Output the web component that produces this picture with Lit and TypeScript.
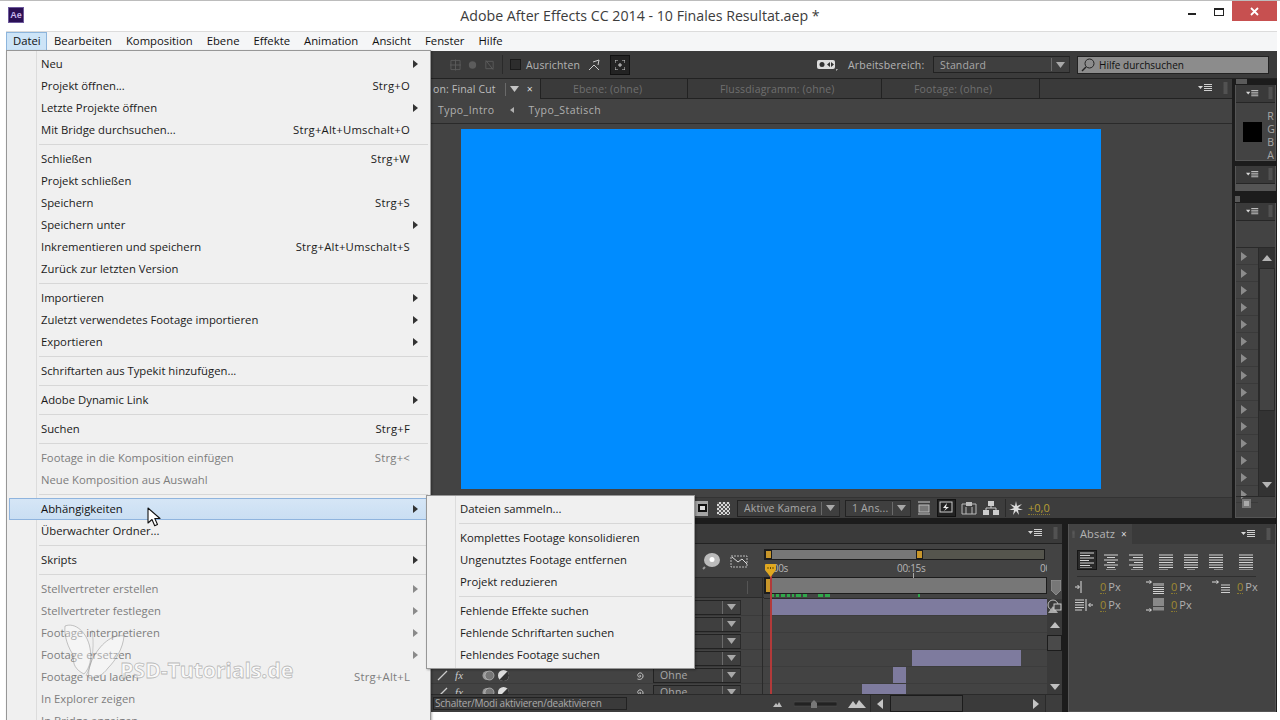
import { LitElement, html, css, svg } from "lit";
import { customElement } from "lit/decorators.js";

type Item = { t: string; s?: string; a?: boolean; d?: boolean; h?: boolean };

const MAIN_MENU: Item[][] = [
  [{ t: "Neu", a: true }, { t: "Projekt öffnen...", s: "Strg+O" }, { t: "Letzte Projekte öffnen", a: true }, { t: "Mit Bridge durchsuchen...", s: "Strg+Alt+Umschalt+O" }],
  [{ t: "Schließen", s: "Strg+W" }, { t: "Projekt schließen" }, { t: "Speichern", s: "Strg+S" }, { t: "Speichern unter", a: true }, { t: "Inkrementieren und speichern", s: "Strg+Alt+Umschalt+S" }, { t: "Zurück zur letzten Version" }],
  [{ t: "Importieren", a: true }, { t: "Zuletzt verwendetes Footage importieren", a: true }, { t: "Exportieren", a: true }],
  [{ t: "Schriftarten aus Typekit hinzufügen..." }],
  [{ t: "Adobe Dynamic Link", a: true }],
  [{ t: "Suchen", s: "Strg+F" }],
  [{ t: "Footage in die Komposition einfügen", s: "Strg+<", d: true }, { t: "Neue Komposition aus Auswahl", d: true }],
  [{ t: "Abhängigkeiten", a: true, h: true }, { t: "Überwachter Ordner..." }],
  [{ t: "Skripts", a: true }],
  [{ t: "Stellvertreter erstellen", a: true, d: true }, { t: "Stellvertreter festlegen", a: true, d: true }, { t: "Footage interpretieren", a: true, d: true }, { t: "Footage ersetzen", a: true, d: true }, { t: "Footage neu laden", s: "Strg+Alt+L", d: true }, { t: "In Explorer zeigen", d: true }, { t: "In Bridge anzeigen", d: true }],
];

const SUB_MENU: Item[][] = [
  [{ t: "Dateien sammeln..." }],
  [{ t: "Komplettes Footage konsolidieren" }, { t: "Ungenutztes Footage entfernen" }, { t: "Projekt reduzieren" }],
  [{ t: "Fehlende Effekte suchen" }, { t: "Fehlende Schriftarten suchen" }, { t: "Fehlendes Footage suchen" }],
];

const MENUBAR = ["Bearbeiten", "Komposition", "Ebene", "Effekte", "Animation", "Ansicht", "Fenster", "Hilfe"];

const BARS = [
  { top: 1, left: 7, width: 276, height: 16 },
  { top: 52, left: 148, width: 109, height: 16 },
  { top: 69, left: 129, width: 13, height: 16 },
  { top: 86, left: 98, width: 44, height: 10 },
];

const GREEN = [[0, 3], [5, 3], [10, 4], [16, 3], [21, 2], [25, 5], [32, 4], [47, 5], [54, 5], [147, 2]];

const menuIcon = () => html`<svg class="ic-menu" viewBox="0 0 16 9"><path d="M0 2h5L2.500 5z" fill="#d8d8d8"/><path d="M6 .5h8M6 2.500h8M6 4.500h8M6 6.500h8" stroke="#d0d0d0" stroke-width="1" fill="none"/></svg>`;
const grip = () => html`<svg class="ic-grip" viewBox="0 0 5 13"><path d="M.5 1h4M.5 3h4M.5 5h4M.5 7h4M.5 9h4M.5 11h4" stroke="#6b6b6b" fill="none"/></svg>`;
const ddArrow = () => html`<span class="dd-sep"></span><svg class="dd-arrow" viewBox="0 0 9 6"><path d="M0 0h9L4.500 6z" fill="#a8a8a8"/></svg>`;
const rightTri = () => html`<svg class="tri" viewBox="0 0 6 9"><path d="M0 0l6 4.500L0 9z" fill="#8c8c8c"/></svg>`;

const alignIcon = (lines: [number, number][]) => html`<svg class="ic-align" viewBox="0 0 18 16">${lines.map(([a, b], i) => svg`<rect x=${a} y=${i * 2.5 + 0.5} width=${b - a} height="1" fill="#d4d4d4"/>`)}</svg>`;
const L: [number, number][] = [[2, 16], [2, 12], [2, 16], [2, 11], [2, 16], [2, 12], [2, 14]];
const C: [number, number][] = [[2, 16], [5, 13], [2, 16], [5, 13], [2, 16], [5, 13], [4, 14]];
const R: [number, number][] = [[2, 16], [6, 16], [2, 16], [7, 16], [2, 16], [6, 16], [4, 16]];
const J1: [number, number][] = [[2, 16], [2, 16], [2, 16], [2, 16], [2, 16], [2, 16], [2, 11]];
const J2: [number, number][] = [[2, 16], [2, 16], [2, 16], [2, 16], [2, 16], [2, 16], [5, 13]];
const J3: [number, number][] = [[2, 16], [2, 16], [2, 16], [2, 16], [2, 16], [2, 16], [7, 16]];
const J4: [number, number][] = [[2, 16], [2, 16], [2, 16], [2, 16], [2, 16], [2, 16], [2, 16]];

const indent = (k: number) => {
  const lines = html`<path d="M7 3h10M7 5.500h10M7 8h10M7 10.500h10M7 13h10" stroke="#d0d0d0" fill="none"/>`;
  const icons = [
    html`<svg class="ic-ind" viewBox="0 0 19 16"><path d="M0 8h4M2.500 6l2 2-2 2" stroke="#ddd" fill="none"/><path d="M6 2v12" stroke="#ddd"/>${lines}</svg>`,
    html`<svg class="ic-ind" viewBox="0 0 19 16"><path d="M0 3h5M3.500 1.500l2 1.500-2 1.500" stroke="#ddd" fill="none"/><rect x="7" y="4" width="11" height="3" fill="#8a8a8a"/><path d="M7 8.500h11M7 10.500h11M7 12.500h11M7 14.500h11" stroke="#d0d0d0" fill="none"/></svg>`,
    html`<svg class="ic-ind" viewBox="0 0 19 16"><path d="M0 3h6M4.500 1.500l2 1.500-2 1.500" stroke="#ddd" fill="none"/><path d="M9 6h9M9 8.500h9M9 11h9M9 13.500h9" stroke="#d0d0d0" fill="none"/></svg>`,
    html`<svg class="ic-ind" viewBox="0 0 19 16"><path d="M0 3h9M0 5.500h9M0 8h9M0 10.500h9M0 13h7" stroke="#d0d0d0" fill="none"/><path d="M11 2v12" stroke="#ddd"/><path d="M18 8h-4M15.500 6l-2 2 2 2" stroke="#ddd" fill="none"/></svg>`,
    html`<svg class="ic-ind" viewBox="0 0 19 16"><path d="M7 2h11M7 4h11M7 6h11M7 8h11" stroke="#d0d0d0" fill="none"/><rect x="7" y="10" width="11" height="3.500" fill="#8a8a8a"/><path d="M0 13h5M3.500 11.500l2 1.500-2 1.500" stroke="#ddd" fill="none"/></svg>`,
  ];
  return icons[k];
};

@customElement("app-root")
export class AppRoot extends LitElement {
  static styles = css`
    :host { display: block; position: relative; width: 1280px; height: 720px; overflow: hidden; background: #fff; font-family: "Open Sans", "Liberation Sans", sans-serif; }
    * { box-sizing: border-box; }
    svg { display: block; flex: none; }

    .title { height: 31px; border-top: 1px solid #bcbcbc; display: flex; align-items: flex-start; position: relative; background: #fff; }
    .ae { width: 16px; height: 16px; margin: 6px 0 0 8px; background: #2b1055; border: 1px solid #6d5a9c; color: #c9b8ec; font: bold 9px/14px "Liberation Sans", sans-serif; text-align: center; }
    .title-text { position: absolute; left: 0; top: 5px; width: 1280px; text-align: center; font: 14.200px/20px "Open Sans", sans-serif; color: #3c3c3c; }
    .win-btns { margin-left: auto; display: flex; align-items: flex-start; }
    .w-min { width: 8px; height: 2px; background: #222; margin: 12px 18px 0 0; }
    .w-max { width: 10px; height: 8px; border: 1px solid #222; border-top-width: 2px; margin: 7px 8px 0 0; }
    .w-close { width: 45px; height: 20px; background: #c75050; display: flex; align-items: center; justify-content: center; margin-right: 3px; }

    .menubar { height: 20px; width: 1277px; background: #f5f6f7; border-top: 1px solid #dcdcdc; display: flex; padding-left: 6px; font: 11.300px/17px "Open Sans", sans-serif; color: #111; }
    .menubar span { padding: 0 7px; white-space: nowrap; }
    .menubar .on { background: #cde4f7; border: 1px solid #8db5dc; border-bottom: none; padding: 0 6px; line-height: 16px; width: 41px; }
    .edge { position: absolute; left: 0; top: 31px; width: 6px; height: 689px; background: #fff; }

    .work { width: 1277px; height: 661px; background: #1c1c1c; color: #b4b4b4; font: 10.500px/14px "Open Sans", sans-serif; letter-spacing: .15px; }

    /* toolbar */
    .toolbar { height: 28px; background: #3b3b3b; display: flex; align-items: center; padding-left: 450px; border-bottom: 1px solid #222; }
    .dimic { width: 11px; height: 12px; margin-right: 6px; }
    .vsep { width: 1px; height: 19px; background: #2a2a2a; margin: 0 7px 0 1px; }
    .check { width: 11px; height: 11px; background: #2d2d2d; border: 1px solid #1a1a1a; margin-right: 5px; }
    .snap { width: 12px; height: 12px; margin-left: 9px; }
    .boxic { width: 20px; height: 20px; background: #232323; border: 1px solid #111; margin-left: 9px; display: flex; align-items: center; justify-content: center; }
    .vr { width: 21px; height: 12px; margin-left: 187px; }
    .wslabel { margin-left: 10px; width: 85px; white-space: nowrap; }
    .dd { height: 17px; display: flex; align-items: center; background: #3f3f3f; border: 1px solid #222; border-right-color: #2a2a2a; padding-left: 6px; color: #a8a8a8; white-space: nowrap; }
    .dd-label { flex: 1; overflow: hidden; }
    .dd-sep { width: 1px; height: 13px; background: #6a6a6a; flex: none; }
    .dd-arrow { width: 9px; height: 6px; margin: 0 4px 0 4px; }
    .dd-ws { width: 137px; }
    .search { width: 192px; height: 18px; margin-left: 7px; background: #8c8c8c; border: 1px solid #222; color: #111; display: flex; align-items: center; padding-left: 3px; gap: 4px; white-space: nowrap; letter-spacing: 0; font-size: 10px; }
    .search svg { width: 14px; height: 14px; }

    /* upper panes */
    .upper { height: 439px; display: flex; }
    .comp { width: 1232px; height: 439px; display: flex; flex-direction: column; background: #434343; }
    .comptabs { height: 20px; display: flex; background: #3a3a3a; border-bottom: 1px solid #222; padding-left: 431px; align-items: stretch; }
    .tab-on { width: 109px; background: #434343; margin-bottom: -1px; display: flex; align-items: center; padding-left: 2px; color: #bcbcbc; white-space: nowrap; }
    .tab-on .dd-sep { margin-left: 9px; }
    .tab-on b { font-weight: 400; color: #ddd; margin-left: 4px; }
    .tab-off { border-left: 1px solid #222; display: flex; align-items: center; padding-left: 32px; color: #6f6f6f; white-space: nowrap; }
    .t1 { width: 147px; } .t2 { width: 194px; } .t3 { width: 159px; border-right: 1px solid #222; }
    .tabs-end { margin-left: auto; display: flex; align-items: center; }
    .ic-menu { width: 16px; height: 9px; }
    .ic-grip { width: 5px; height: 13px; margin: 0 4px 0 9px; }
    .crumbs { height: 25px; display: flex; align-items: center; padding: 0 0 2px 438px; border-bottom: 1px solid #2a2a2a; color: #b0b0b0; letter-spacing: .45px; }
    .crumbs svg { width: 4px; height: 6px; margin: 0 15px 0 15px; }
    .viewer { height: 373px; padding: 5px 0 0 461px; }
    .blue { width: 640px; height: 360px; background: #008cff; }
    .compfoot { height: 21px; background: #3d3d3d; border-top: 1px solid #333; display: flex; align-items: center; padding-left: 694px; }
    .fgrp { width: 14px; height: 15px; background: #a4a4a4; display: flex; align-items: center; justify-content: flex-end; }
    .fbox { width: 9px; height: 8px; background: #ddd; border: 2px solid #111; margin-right: 1px; }
    .checker { width: 13px; height: 13px; margin-left: 9px; background: repeating-conic-gradient(#d8d8d8 0 25%, #555 0 50%) 0 0 / 4px 4px; }
    .dd-cam { width: 103px; margin-left: 7px; }
    .dd-ans { width: 66px; margin-left: 5px; }
    .fic { width: 14px; height: 14px; margin-left: 6px; }
    .fic-sel { width: 19px; height: 18px; margin-left: 6px; background: #222; border: 1px solid #111; padding: 1px; }
    .fic2 { width: 16px; height: 14px; margin-left: 5px; }
    .fic3 { margin-left: 6px; }
    .exposure { margin-left: 5px; color: #b89e34; border-bottom: 1px dotted #8a7a30; line-height: 12px; font-size: 11px; letter-spacing: 0; }
    .shut { width: 14px; height: 14px; margin-left: 3px; }
    .fsep { width: 1px; height: 18px; background: #2a2a2a; margin-left: 6px; }

    /* side */
    .side { width: 41px; margin-left: 3px; display: flex; flex-direction: column; }
    .mini { height: 5px; width: 11px; background: #5a5a5a; margin: 0 0 1px 1px; }
    .mini.small { width: 5px; height: 6px; margin: 5px 0 1px 0; }
    .sp { background: #434343; border: 1px solid #555; border-top: none; }
    .sp-head { height: 18px; background: #3a3a3a; border-bottom: 1px solid #262626; display: flex; align-items: center; justify-content: flex-end; }
    .sp-head .ic-menu { width: 14px; height: 8px; }
    .sp-head .ic-grip { margin: 0 2px 0 8px; }
    .sp1 { height: 76px; }
    .info { display: flex; padding: 19px 0 0 7px; height: 58px; overflow: hidden; }
    .swatch { width: 20px; height: 20px; background: #000; }
    .rgba { margin-left: 5px; margin-top: -12px; line-height: 13px; color: #a8a8a8; width: 8px; letter-spacing: 0; }
    .sp2 { height: 25px; margin-top: 5px; }
    .sp2 i { display: block; height: 6px; background: #555; }
    .sp3 { flex: 1; display: flex; flex-direction: column; }
    .sp3 .hole { height: 26px; }
    .list { display: flex; height: 249px; border-top: 1px solid #2a2a2a; }
    .tris { width: 22px; }
    .tris div { height: 17px; border-bottom: 1px solid #3a3a3a; display: flex; align-items: center; padding-left: 5px; }
    .tri { width: 6px; height: 9px; }
    .vscroll { flex: 1; background: #333; border-left: 1px solid #2a2a2a; display: flex; flex-direction: column; align-items: center; }
    .vs-up { height: 20px; display: flex; align-items: center; }
    .vs-th { width: 100%; height: 143px; background: #434343; border: 1px solid #2a2a2a; }
    .vs-dn { margin-top: auto; height: 14px; }
    .arr { width: 10px; height: 6px; }
    .sp-foot { height: 15px; padding: 2px 0 0 6px; border-top: 1px solid #2a2a2a; }
    .sp-foot div { width: 9px; height: 9px; background: #aaa; border: 2px solid #777; }

    /* lower */
    .lower { display: flex; margin-top: 6px; height: 188px; }
    .tl { width: 1062px; display: flex; flex-direction: column; background: #434343; position: relative; }
    .lhead { height: 20px; background: #3a3a3a; border-bottom: 1px solid #222; display: flex; justify-content: flex-end; align-items: center; }
    .tl-mid { flex: 1; display: flex; min-height: 0; overflow: hidden; }
    .tl-left { width: 764px; display: flex; flex-direction: column; }
    .tl-lefttop { height: 55px; flex: none; }
    .ictop { height: 33px; display: flex; justify-content: flex-end; align-items: center; padding-right: 16px; gap: 10px; }
    .bulb { width: 18px; height: 18px; } .graph { width: 18px; height: 14px; }
    .lefthdr { height: 21px; background: #3b3b3b; border-top: 1px solid #2a2a2a; border-bottom: 1px solid #2a2a2a; display: flex; justify-content: flex-end; }
    .lefthdr i { width: 1px; background: #555; margin: 3px 16px 3px 0; }
    .lrow { height: 17px; border-bottom: 1px solid #3a3a3a; display: flex; align-items: center; padding-left: 437px; flex: none; }
    .pen { width: 11px; height: 11px; }
    .fx { font: italic 11px/14px "Liberation Serif", serif; color: #ccc; margin-left: 7px; width: 18px; }
    .sw { width: 14px; height: 11px; margin-left: 8px; }
    .swb { width: 13px; height: 13px; margin-left: 2px; }
    .spir { width: 11px; height: 11px; margin-left: auto; position: relative; left: -2px; }
    .dd-ohne { width: 88px; height: 15px; margin: 0 23px 0 6px; padding-left: 6px; }
    .tl-right { width: 298px; position: relative; }
    .rtop { height: 54px; width: 283px; padding-top: 5px; }
    .wa { height: 11px; display: flex; background: #55554d; border: 1px solid #1c1c1c; width: 281px; }
    .wa-on { width: 144px; background: #777; }
    .hnd { width: 7px; background: #c8962a; border: 1px solid #1c1c1c; flex: none; }
    .ruler { height: 18px; position: relative; color: #b6b6b6; font-size: 10px; letter-spacing: -.3px; white-space: nowrap; overflow: hidden; }
    .ruler span { position: absolute; top: 1px; }
    .ruler .r1 { left: 1px; } .ruler .r2 { left: 133px; } .ruler .r3 { left: 276px; }
    .ruler i { position: absolute; left: 149px; top: 13px; width: 1px; height: 5px; background: #aaa; }
    .nav { height: 17px; background: #777; border: 1px solid #1c1c1c; display: flex; margin-top: -1px; }
    .nav .hnd { width: 6px; }
    .greens { height: 4px; display: flex; padding-left: 7px; position: relative; }
    .greens i { position: absolute; top: 0; height: 3px; background: #2fa84a; }
    .shield { position: absolute; left: 287px; top: 36px; width: 10px; height: 15px; }
    .lanes { position: relative; height: 96px; width: 283px; border-top: 1px solid #2a2a2a; overflow: hidden; }
    .lanes .bar { position: absolute; background: #7e7b9e; }
    .lane-line { height: 17px; border-bottom: 1px solid #3c3c3c; }
    .redline { position: absolute; left: 6px; top: 21px; width: 1.500px; height: 135px; background: #b23a3a; }
    .playhead { position: absolute; left: 1px; top: 20px; width: 11px; height: 13px; }
    .leftline { position: absolute; left: -2px; top: 33px; width: 1px; height: 125px; background: #2a2a2a; }
    .tlscroll { position: absolute; left: 283px; top: 55px; width: 15px; height: 96px; background: #3a3a3a; display: flex; flex-direction: column; align-items: center; }
    .layers-ic { width: 15px; height: 15px; }
    .ts-up { height: 21px; width: 100%; display: flex; align-items: center; justify-content: center; }
    .ts-th { height: 16px; width: 100%; background: #4a4a4a; border: 1px solid #1c1c1c; }
    .ts-dn { margin-top: auto; height: 16px; display: flex; align-items: center; }
    .tl-bot { height: 18px; background: #3d3d3d; border-top: 1px solid #2a2a2a; display: flex; align-items: center; padding-left: 433px; flex: none; }
    .status { width: 194px; height: 13px; background: #3a3a3a; border: 1px solid #222; font-size: 10px; line-height: 11px; color: #aaa; padding-left: 1px; white-space: nowrap; letter-spacing: -.22px; }
    .mt-s { width: 9px; height: 6px; margin-left: 146px; }
    .zslider { width: 43px; height: 8px; margin-left: 12px; }
    .mt-b { width: 18px; height: 8px; margin-left: 11px; }
    .hscroll { width: 176px; height: 17px; margin-left: 4px; display: flex; align-items: center; background: #3a3a3a; border-left: 1px solid #2a2a2a; border-right: 1px solid #2a2a2a; padding: 0 6px; }
    .hscroll svg { width: 6px; height: 10px; }
    .hs-th { width: 73px; height: 17px; background: #444; border: 1px solid #1c1c1c; margin: 0 auto 0 7px; }

    .para { width: 208px; margin-left: 6px; background: #434343; border: 1px solid #555; border-top: none; display: flex; flex-direction: column; }
    .phead { height: 20px; background: #3a3a3a; display: flex; align-items: center; }
    .ptab { width: 63px; height: 20px; background: #434343; display: flex; align-items: center; padding-left: 3px; color: #b4b4b4; font-size: 11px; }
    .ptab .ic-grip { width: 3px; margin: 0 5px 0 0; }
    .ptab b { font-weight: 400; color: #ddd; margin-left: 6px; font-size: 10px; }
    .phead-end { margin-left: auto; display: flex; align-items: center; }
    .aligns { display: flex; height: 26px; align-items: flex-end; padding-left: 8px; }
    .ic-align { width: 18px; height: 16px; }
    .alsel { width: 20px; height: 20px; background: #2a2a2a; border: 1px solid #161616; padding: 1px 0; display: flex; justify-content: center; margin-right: 5px; }
    .aligns > svg { margin-right: 7px; }
    .aligns > .gap { margin-left: 5px; }
    .aligns > .gap2 { margin-left: 5px; }
    .pline { height: 1px; background: #2f2f2f; margin: 6px 19px 0 8px; }
    .prows { display: grid; grid-template-columns: 71px 66px 60px; grid-auto-rows: 18px; padding: 1px 0 0 6px; }
    .pcell { display: flex; align-items: center; color: #b0b0b0; letter-spacing: 0; font-size: 11px; }
    .ic-ind { width: 19px; height: 16px; }
    .pcell u { color: #a08a32; text-decoration: none; border-bottom: 1px dotted #8a7a30; margin: 0 2px 0 6px; line-height: 12px; font-size: 11px; }
    .whitebar { height: 8px; }

    /* menus */
    .menu { position: absolute; background: #f0f0f0; border: 1px solid #979797; padding: 2px; font: 11.300px/22px "Open Sans", sans-serif; color: #1a1a1a; box-shadow: 1px 1px 2px rgba(0,0,0,.3); letter-spacing: 0; }
    .main { left: 6px; top: 50px; width: 425px; height: 700px; }
    .sub { left: 426px; top: 495px; width: 269px; height: 174px; }
    .menu::before { content: ""; position: absolute; top: 0; bottom: 0; width: 1px; background: #dcdcdc; }
    .main::before { left: 29px; }
    .sub::before { left: 28px; }
    .row { height: 22px; display: flex; padding: 0 10px 0 32px; white-space: nowrap; align-items: center; position: relative; }
    .sub .row { padding-left: 31px; }
    .row.d { color: #7d7d7d; }
    .row.h { background: linear-gradient(#d6e6f6, #c9def3); outline: 1px solid #8fb4de; outline-offset: -1px; color: #111; }
    .lbl { flex: 1; }
    .sc { margin-right: 8px; letter-spacing: .22px; }
    .ma { width: 5px; height: 8px; margin-left: -3px; }
    .sep { height: 1px; background: #d7d7d7; margin: 3px 0 3px 30px; position: relative; }

    .cursor { position: absolute; left: 147px; top: 507px; width: 15px; height: 21px; }
    .wm { position: absolute; left: 62px; top: 622px; pointer-events: none; display: flex; }
    .wm svg { width: 66px; height: 60px; }
    .wm span { font: bold 21.500px/24px "Open Sans", sans-serif; color: rgba(255,255,255,.65); -webkit-text-stroke: .8px rgba(110,110,110,.45); margin: 36px 0 0 -8px; white-space: nowrap; letter-spacing: -.2px; }
  `;

  private renderMenu(groups: Item[][]) {
    return groups.map((g, i) => html`
      ${i ? html`<div class="sep"></div>` : ""}
      ${g.map((it) => html`<div class="row ${it.d ? "d" : ""} ${it.h ? "h" : ""}">
        <span class="lbl">${it.t}</span>
        ${it.s ? html`<span class="sc">${it.s}</span>` : ""}
        ${it.a ? html`<svg class="ma" viewBox="0 0 5 8"><path d="M0 0l5 4-5 4z" fill=${it.d ? "#8a8a8a" : "#333"}/></svg>` : ""}
      </div>`)}
    `);
  }

  private layerRow() {
    return html`<div class="lrow">
      <svg class="pen" viewBox="0 0 11 11"><path d="M1 10L10 1" stroke="#ccc" stroke-width="1.300"/></svg>
      <span class="fx">fx</span>
      <svg class="sw" viewBox="0 0 14 11"><circle cx="6" cy="5.500" r="4.500" fill="#999"/><circle cx="8.500" cy="5.500" r="4.500" fill="#777" stroke="#ccc" stroke-width=".6"/></svg>
      <svg class="swb" viewBox="0 0 13 13"><circle cx="6.500" cy="6.500" r="5.500" fill="#ddd"/><path d="M6.500 1a5.500 5.500 0 0 1 0 11z" fill="#333" transform="rotate(45 6.500 6.500)"/></svg>
      <svg class="spir" viewBox="0 0 11 11"><path d="M5.500 5.500c1-1 2 1 .5 1.500-2 .5-3-2-1.500-3.500 2-1.500 4.500 0 4.500 2.500 0 3-3 4-5.500 3" stroke="#ccc" fill="none"/></svg>
      <div class="dd dd-ohne"><span class="dd-label">Ohne</span>${ddArrow()}</div>
    </div>`;
  }

  render() {
    return html`
      <div class="title">
        <div class="ae">Ae</div>
        <div class="title-text">Adobe After Effects CC 2014 - 10 Finales Resultat.aep *</div>
        <div class="win-btns">
          <div class="w-min"></div><div class="w-max"></div>
          <div class="w-close"><svg width="9" height="9" viewBox="0 0 9 9"><path d="M1 1l7 7M8 1L1 8" stroke="#fff" stroke-width="1.800"/></svg></div>
        </div>
      </div>
      <div class="menubar"><span class="on">Datei</span>${MENUBAR.map((m) => html`<span>${m}</span>`)}</div>

      <div class="work">
        <div class="toolbar">
          <svg class="dimic" viewBox="0 0 12 12"><path d="M6 0v12M0 6h12M1 1h10v10H1z" stroke="#5c5c5c" fill="none"/></svg>
          <svg class="dimic" viewBox="0 0 12 12"><circle cx="6" cy="6" r="4" fill="#5c5c5c"/></svg>
          <svg class="dimic" viewBox="0 0 12 12"><path d="M2 1l8 10M2 2h8v8H2z" stroke="#5c5c5c" fill="none"/></svg>
          <div class="vsep"></div>
          <div class="check"></div>
          <span>Ausrichten</span>
          <svg class="snap" viewBox="0 0 12 12"><path d="M0 11l5-5 5 5M4 3l6-2-1 5" stroke="#ccc" fill="none"/></svg>
          <div class="boxic"><svg width="10" height="10" viewBox="0 0 10 10"><path d="M0 3V0h3M7 0h3v3M0 7v3h3M7 10h3V7M4 4h2v2H4z" stroke="#ccc" fill="none"/></svg></div>
          <svg class="vr" viewBox="0 0 21 12"><rect x="0" y="1" width="18" height="9" rx="2" fill="#ddd"/><circle cx="5" cy="5.500" r="2.500" fill="#333"/><path d="M10 5.500l3-2.500v5zM17 5.500l-3-2.500v5z" fill="#333"/><path d="M20 10v1h-1" stroke="#ccc" fill="none"/></svg>
          <span class="wslabel">Arbeitsbereich:</span>
          <div class="dd dd-ws"><span class="dd-label">Standard</span>${ddArrow()}</div>
          <div class="search"><svg viewBox="0 0 14 14"><circle cx="8.500" cy="5.500" r="4.500" stroke="#222" fill="none"/><path d="M5 9l-4 4" stroke="#222" stroke-width="1.500"/></svg><span>Hilfe durchsuchen</span></div>
        </div>

        <div class="upper">
          <div class="comp">
            <div class="comptabs">
              <div class="tab-on"><span>on: Final Cut</span><span class="dd-sep"></span><svg class="dd-arrow" viewBox="0 0 9 6"><path d="M0 0h9L4.500 6z" fill="#c4c4c4"/></svg><b>×</b></div>
              <div class="tab-off t1">Ebene: (ohne)</div>
              <div class="tab-off t2">Flussdiagramm: (ohne)</div>
              <div class="tab-off t3">Footage: (ohne)</div>
              <div class="tabs-end">${menuIcon()}${grip()}</div>
            </div>
            <div class="crumbs"><span>Typo_Intro</span><svg viewBox="0 0 4 6"><path d="M4 0L0 3l4 3z" fill="#b0b0b0"/></svg><span>Typo_Statisch</span></div>
            <div class="viewer"><div class="blue"></div></div>
            <div class="compfoot">
              <div class="fgrp"><div class="fbox"></div></div>
              <div class="checker"></div>
              <div class="dd dd-cam"><span class="dd-label">Aktive Kamera</span>${ddArrow()}</div>
              <div class="dd dd-ans"><span class="dd-label">1 Ans...</span>${ddArrow()}</div>
              <svg class="fic" viewBox="0 0 14 14"><path d="M1 1h12M1 13h12" stroke="#ccc"/><rect x="2" y="4" width="10" height="7" fill="#777" stroke="#bbb"/></svg>
              <svg class="fic-sel" viewBox="0 0 15 14"><rect x="1" y="1" width="12" height="10" fill="none" stroke="#ccc"/><path d="M8 2L4 7h3L5 10l5-4H7z" fill="#eee"/></svg>
              <svg class="fic2" viewBox="0 0 16 14"><path d="M1 3h14v10H1zM5 6v7M11 6v7" stroke="#bbb" fill="none"/><path d="M5 1h6v4H5z" fill="#bbb"/></svg>
              <svg class="fic2 fic3" viewBox="0 0 16 14"><path d="M5 0h6v5H5zM0 9h6v5H0zM10 9h6v5h-6z" fill="#ccc"/><path d="M8 5v2M3 9V7h10v2" stroke="#ccc" fill="none"/></svg>
              <div class="fsep"></div>
              <svg class="shut" viewBox="0 0 14 14"><path d="M7 0l1 5 5-2-4 4 5 2-5 0 1 5-3-4-3 4 1-5-5 0 5-2-4-4 5 2z" fill="#ddd"/></svg>
              <span class="exposure">+0,0</span>
            </div>
          </div>

          <div class="side">
            <div class="mini"></div>
            <div class="sp sp1">
              <div class="sp-head">${menuIcon()}${grip()}</div>
              <div class="info"><div class="swatch"></div><div class="rgba">R<br />G<br />B<br />A</div></div>
            </div>
            <div class="sp sp2"><div class="sp-head">${menuIcon()}${grip()}</div><i></i></div>
            <div class="mini small"></div>
            <div class="sp sp3">
              <div class="sp-head">${menuIcon()}${grip()}</div>
              <div class="hole"></div>
              <div class="list">
                <div class="tris">${Array.from({ length: 15 }, () => html`<div>${rightTri()}</div>`)}</div>
                <div class="vscroll">
                  <div class="vs-up"><svg class="arr" viewBox="0 0 10 6"><path d="M5 0l5 6H0z" fill="#b4b4b4"/></svg></div>
                  <div class="vs-th"></div>
                  <div class="vs-dn"><svg class="arr" viewBox="0 0 10 6"><path d="M0 0h10L5 6z" fill="#b4b4b4"/></svg></div>
                </div>
              </div>
              <div class="sp-foot"><div></div></div>
            </div>
          </div>
        </div>

        <div class="lower">
          <div class="tl">
            <div class="lhead">${menuIcon()}${grip()}</div>
            <div class="tl-mid">
              <div class="tl-left">
                <div class="tl-lefttop">
                  <div class="ictop">
                    <svg class="bulb" viewBox="0 0 18 18"><ellipse cx="10" cy="8" rx="8" ry="7" fill="#bbb"/><circle cx="10" cy="7.500" r="2.500" fill="#fff"/><path d="M3 15l-2 2" stroke="#999" stroke-width="2"/></svg>
                    <svg class="graph" viewBox="0 0 18 14"><path d="M1 2h16v11H1z" stroke="#bbb" fill="none" stroke-dasharray="2 1"/><path d="M2 3l6 5 4-3 5 5" stroke="#ddd" fill="none"/></svg>
                  </div>
                  <div class="lefthdr"><i></i></div>
                </div>
                ${Array.from({ length: 6 }, () => this.layerRow())}
              </div>
              <div class="tl-right">
                <div class="rtop">
                  <div class="wa"><div class="hnd"></div><div class="wa-on"></div><div class="hnd"></div></div>
                  <div class="ruler"><span class="r1">0:00s</span><span class="r2">00:15s</span><span class="r3">00</span><i></i></div>
                  <div class="nav"><div class="hnd"></div></div>
                  <div class="greens">${GREEN.map(([l, w]) => html`<i style="left:${l + 7}px;width:${w}px"></i>`)}</div>
                </div>
                <div class="lanes">
                  ${[0, 1, 2, 3, 4, 5].map(() => html`<div class="lane-line"></div>`)}
                  ${BARS.map((b) => html`<div class="bar" style="top:${b.top - 1}px;left:${b.left}px;width:${b.width}px;height:${b.height}px"></div>`)}
                </div>
                <div class="leftline"></div>
                <div class="redline"></div>
                <svg class="playhead" viewBox="0 0 11 13"><path d="M0 1q0-1 1-1h9q1 0 1 1v5l-5.500 7L0 6z" fill="#e0a820"/><path d="M3 3v2M5.500 3v2M8 3v2" stroke="#6b4f00"/></svg>
                <svg class="shield" viewBox="0 0 10 15"><path d="M0 0h10v10l-5 5-5-5z" fill="#777" stroke="#aaa" stroke-width=".6"/></svg>
                <div class="tlscroll">
                  <svg class="layers-ic" viewBox="0 0 15 15"><circle cx="6" cy="6" r="5" stroke="#bbb" fill="none"/><path d="M1 14l5-7 5 7z" fill="#aaa"/><rect x="7" y="5" width="7" height="6" stroke="#ccc" fill="#444"/></svg>
                  <div class="ts-up"><svg class="arr" viewBox="0 0 10 6"><path d="M5 0l5 6H0z" fill="#c0c0c0"/></svg></div>
                  <div class="ts-th"></div>
                  <div class="ts-dn"><svg class="arr" viewBox="0 0 10 6"><path d="M0 0h10L5 6z" fill="#c0c0c0"/></svg></div>
                </div>
              </div>
            </div>
            <div class="tl-bot">
              <div class="status">Schalter/Modi aktivieren/deaktivieren</div>
              <svg class="mt-s" viewBox="0 0 9 6"><path d="M0 6l3-4 1.500 2L6 1l3 5z" fill="#bbb"/></svg>
              <svg class="zslider" viewBox="0 0 43 8"><rect y="2" width="43" height="4" fill="#222" stroke="#555" stroke-width=".5"/><path d="M17 8V3l3-3 3 3v5z" fill="#777"/></svg>
              <svg class="mt-b" viewBox="0 0 18 8"><path d="M0 8l5-7 3 4 3-5 7 8z" fill="#c4c4c4"/></svg>
              <div class="hscroll">
                <svg viewBox="0 0 6 10"><path d="M6 0L0 5l6 5z" fill="#c4c4c4"/></svg>
                <div class="hs-th"></div>
                <svg viewBox="0 0 6 10"><path d="M0 0l6 5-6 5z" fill="#c4c4c4"/></svg>
              </div>
            </div>
          </div>

          <div class="para">
            <div class="phead">
              <div class="ptab">${grip()}<span>Absatz</span><b>×</b></div>
              <div class="phead-end">${menuIcon()}${grip()}</div>
            </div>
            <div class="aligns">
              <div class="alsel">${alignIcon(L)}</div>
              ${alignIcon(C)}${alignIcon(R)}
              <span class="gap"></span>${alignIcon(J1)}${alignIcon(J2)}${alignIcon(J3)}<span class="gap2"></span>${alignIcon(J4)}
            </div>
            <div class="pline"></div>
            <div class="prows">
              ${[0, 1, 2, 3, 4].map((k) => html`<div class="pcell">${indent(k)}<u>0</u>Px</div>`)}
            </div>
          </div>
        </div>
      </div>
      <div class="whitebar"></div>
      <div class="edge"></div>

      <div class="menu main">${this.renderMenu(MAIN_MENU)}</div>
      <div class="menu sub">${this.renderMenu(SUB_MENU)}</div>

      <div class="wm">
        <svg viewBox="0 0 66 60"><path d="M3 4c10-4 22 6 25 22 2 10 0 20-6 26-8-4-12-10-10-18C6 26 2 14 3 4z" fill="rgba(255,255,255,.35)" stroke="rgba(130,130,130,.45)"/><path d="M62 14c-12-2-24 8-32 24-3 7-4 13-3 18 8 0 14-3 19-10 8-8 15-20 16-32z" fill="rgba(255,255,255,.35)" stroke="rgba(130,130,130,.45)"/><path d="M30 8c2 12 2 30-6 46" stroke="rgba(130,130,130,.35)" fill="none"/></svg>
        <span>PSD-Tutorials.de</span>
      </div>

      <svg class="cursor" viewBox="0 0 15 21"><path d="M1 1v15l4-3.500 2.700 6.200 2.800-1.200-2.700-6h5.200z" fill="#fff" stroke="#111" stroke-width="1.100" stroke-linejoin="round"/></svg>
    `;
  }
}
